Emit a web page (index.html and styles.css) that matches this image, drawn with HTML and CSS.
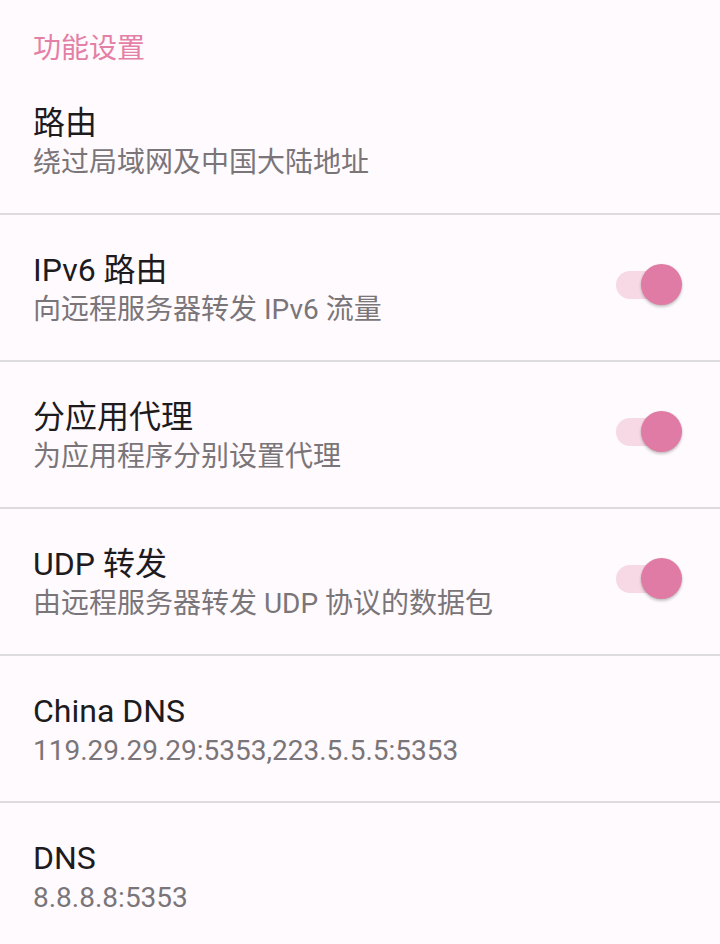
FILE: index.html
```html
<!DOCTYPE html>
<html lang="zh-CN">
<head>
<meta charset="utf-8">
<title>功能设置</title>
<link rel="stylesheet" href="styles.css">
</head>
<body>
<div class="screen">
  <div class="category">功能设置</div>
  <div class="pref">
    <div class="texts">
      <div class="title">路由</div>
      <div class="summary">绕过局域网及中国大陆地址</div>
    </div>
  </div>
  <div class="pref">
    <div class="texts">
      <div class="title">IPv6 路由</div>
      <div class="summary">向远程服务器转发 IPv6 流量</div>
    </div>
    <div class="switch"><span class="track"></span><span class="thumb"></span></div>
  </div>
  <div class="pref">
    <div class="texts">
      <div class="title">分应用代理</div>
      <div class="summary">为应用程序分别设置代理</div>
    </div>
    <div class="switch"><span class="track"></span><span class="thumb"></span></div>
  </div>
  <div class="pref">
    <div class="texts">
      <div class="title">UDP 转发</div>
      <div class="summary">由远程服务器转发 UDP 协议的数据包</div>
    </div>
    <div class="switch"><span class="track"></span><span class="thumb"></span></div>
  </div>
  <div class="pref">
    <div class="texts">
      <div class="title">China DNS</div>
      <div class="summary">119.29.29.29:5353,223.5.5.5:5353</div>
    </div>
  </div>
  <div class="pref last">
    <div class="texts">
      <div class="title">DNS</div>
      <div class="summary">8.8.8.8:5353</div>
    </div>
  </div>
</div>
</body>
</html>
```
FILE: styles.css
```css
html, body {
  margin: 0;
  padding: 0;
  background: #fffafd;
}
body {
  font-family: Roboto, "Noto Sans CJK SC", sans-serif;
  width: 720px;
  height: 944px;
  overflow: hidden;
}
.screen {
  display: flex;
  flex-direction: column;
}
.category {
  padding: 32px 33px 2px;
  height: 34px;
  line-height: 34px;
  font-size: 28px;
  color: #e47fa6;
}
.pref {
  display: flex;
  align-items: center;
  padding: 33px 38px 32px 33px;
  border-bottom: 2px solid #dedbde;
}
.pref.last {
  border-bottom: none;
}
.texts {
  flex: 1;
  display: flex;
  flex-direction: column;
}
.title {
  font-size: 32px;
  line-height: 44px;
  color: #1d1b1e;
}
.summary {
  font-size: 28px;
  line-height: 36px;
  color: #797579;
}
.switch {
  position: relative;
  width: 66px;
  height: 42px;
  margin-top: -6px;
}
.track {
  position: absolute;
  left: 0;
  top: 7px;
  width: 60px;
  height: 28px;
  border-radius: 14px;
  background: #f6d9e5;
}
.thumb {
  position: absolute;
  left: 25px;
  top: 0;
  width: 41px;
  height: 41px;
  border-radius: 50%;
  background: #df7ba4;
  box-shadow: 0 2px 3px rgba(0, 0, 0, 0.22), 0 0 2px rgba(0, 0, 0, 0.08);
}
```
